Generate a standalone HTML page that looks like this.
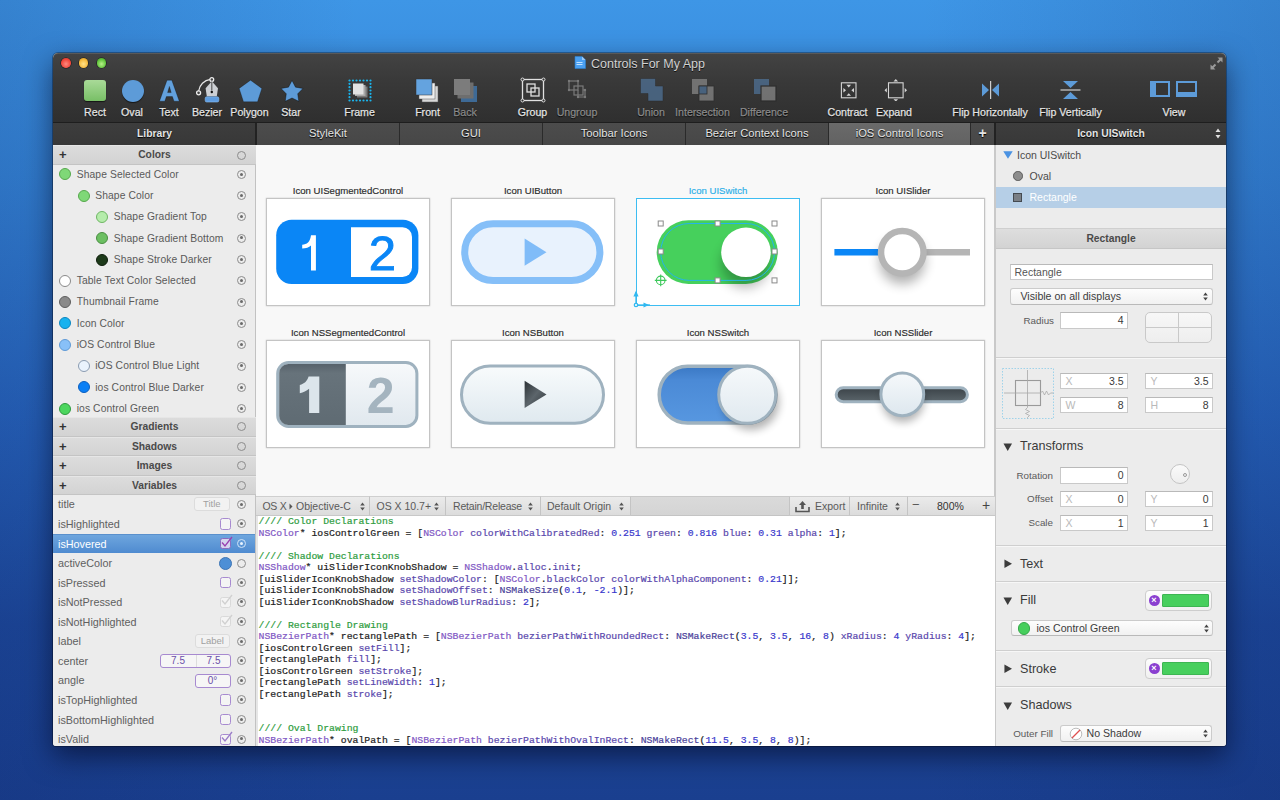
<!DOCTYPE html>
<html><head><meta charset="utf-8">
<style>
*{box-sizing:border-box;margin:0;padding:0}
html,body{width:1280px;height:800px;overflow:hidden}
body{position:relative;font-family:"Liberation Sans",sans-serif;background:linear-gradient(90deg,rgba(10,30,90,.16) 0%,rgba(10,30,90,0) 28%,rgba(10,30,90,0) 72%,rgba(10,30,90,.16) 100%),linear-gradient(180deg,#3e96e6 0%,#3585d8 22%,#2764bd 52%,#1d489b 78%,#1a3f8f 100%)}
.a{position:absolute}
#win{left:53px;top:53px;width:1173px;height:693px;background:#ececec;border-radius:5px 5px 3px 3px;box-shadow:0 10px 28px rgba(0,0,20,.55),0 0 0 1px rgba(0,0,0,.3)}
#tb{left:53px;top:53px;width:1173px;height:70px;background:linear-gradient(180deg,#434343 0%,#393939 40%,#2f2f2f 100%);border-radius:5px 5px 0 0;border-bottom:1px solid #1e1e1e;box-shadow:inset 0 1px 0 rgba(255,255,255,.12)}
.lbl{position:absolute;top:106px;font-size:10.6px;color:#e4e4e4;-webkit-text-stroke:.25px currentColor;text-shadow:0 1px 1px #000;white-space:nowrap;transform:translateX(-50%)}
.dim{color:#8a8a8a}
.tl{position:absolute;top:58.2px;width:9.5px;height:9.5px;border-radius:50%;box-shadow:0 0 0 .6px rgba(0,0,0,.55)}

.tab{position:absolute;top:123px;height:22px;background:linear-gradient(#4c4c4c,#474747);border-right:1px solid #2a2a2a;color:#e4e4e4;font-size:11.2px;text-align:center;line-height:21px;text-shadow:0 1px 1px #000;white-space:nowrap}
.hdr{position:absolute;top:123px;height:22px;background:linear-gradient(#3d3d3d,#383838);color:#e4e4e4;font-size:10.3px;font-weight:bold;text-align:center;line-height:21px;text-shadow:0 1px 1px #000}
.sec{position:absolute;left:53px;width:203px;height:19.5px;background:linear-gradient(#dcdcdc,#d3d3d3);border-bottom:1px solid #c4c4c4;border-top:1px solid #e6e6e6;font-size:10.3px;font-weight:bold;color:#4a4a4a;text-align:center;line-height:18px}
.sec .pl{position:absolute;left:6px;top:0;font-size:13px;font-weight:bold;color:#333}
.rad{position:absolute;width:9px;height:9px;border-radius:50%;border:1.2px solid #8c8c8c}
.rad.on::after{content:"";position:absolute;left:1.8px;top:1.8px;width:3px;height:3px;border-radius:50%;background:#6a6a6a}
.row{position:absolute;font-size:10.3px;color:#5a5a5a;letter-spacing:.1px;white-space:nowrap;line-height:12px}
.dot{position:absolute;width:12px;height:12px;border-radius:50%}
.vrow{position:absolute;left:58px;font-size:10.8px;color:#606060;white-space:nowrap;line-height:12px}
.cb{position:absolute;left:219.5px;width:11.2px;height:11.2px;border:1.2px solid #a78ad0;border-radius:2.5px;background:#f4f4f4}
.fld{position:absolute;height:13px;border:1px solid #a78ad0;border-radius:3px;background:#f6f6f6;font-size:10px;color:#6a50a8;text-align:center;line-height:11px}

.frm{position:absolute;width:164px;height:108px;background:#fff;border:1px solid #c4c4c4;box-shadow:0 0 1.5px rgba(0,0,0,.22)}
.ft{position:absolute;width:164px;text-align:center;font-size:9.6px;color:#2a2a2a;white-space:nowrap;line-height:11px;-webkit-text-stroke:.15px currentColor}

.bb{position:absolute;top:496px;height:20px;background:linear-gradient(#ebebeb,#dcdcdc);border-right:1px solid #c4c4c4;border-top:1px solid #cfcfcf;border-bottom:1px solid #c8c8c8;font-size:10.5px;color:#5a5a5a;line-height:18px;white-space:nowrap}
.ud{position:absolute;top:5px;width:5px;height:9px}
.code{position:absolute;left:258.5px;font-family:"Liberation Mono",monospace;font-size:9.8px;color:#222;white-space:pre;line-height:11.5px;-webkit-text-stroke:.2px currentColor}
.cm{color:#2e9d40}.cl{color:#7f58c4}.me{color:#5a48ad}.nu{color:#3838cc}.fn{color:#4a3f9a}

.inp{position:absolute;height:16.5px;background:#fff;border:1px solid #c9c9c9;border-top-color:#b9b9b9;font-size:10.5px;color:#3a3a3a;line-height:14px;white-space:nowrap}
.inp .ph{position:absolute;left:5px;top:0;color:#b9b9b9}
.inp .v{position:absolute;right:3px;top:0}
.pop{position:absolute;height:17px;border-radius:3px;background:linear-gradient(#fdfdfd,#f1f1f1);border:1px solid #cbcbcb;border-bottom-color:#b9b9b9;font-size:10.6px;color:#3c3c3c;line-height:15px;white-space:nowrap}
.plbl{position:absolute;font-size:9.8px;color:#5a5a5a;text-align:right;white-space:nowrap;line-height:12px}
.shdr{position:absolute;left:1004px;font-size:12.6px;color:#3a3a3a;white-space:nowrap;line-height:14px}
.tri{position:absolute;left:1003px;width:9.5px;height:9.5px}
.hr{position:absolute;left:996px;width:230px;height:1px;background:#cfcfcf;border-bottom:1px solid #f7f7f7;height:2px}
.well{position:absolute;left:1144.5px;width:67.5px;height:20.5px;border-radius:4px;background:linear-gradient(#fdfdfd,#f0f0f0);border:1px solid #cdcdcd}
.well .sw{position:absolute;left:16.5px;top:2.5px;width:47px;height:13.5px;background:#47cf5d;border-radius:1px;border:1px solid #3db552}
.well .x{position:absolute;left:3px;top:4px;width:11px;height:11px;border-radius:50%;background:#8a3fd0;color:#fff;font-size:9px;font-weight:bold;text-align:center;line-height:11px}
</style></head><body>
<div id="win" class="a"></div>
<div id="tb" class="a"></div>
<div class="tl" style="left:61px;background:radial-gradient(circle at 50% 60%,#ff8a80,#f2453a 60%,#b8281f)"></div>
<div class="tl" style="left:78.8px;background:radial-gradient(circle at 50% 60%,#ffe28a,#f5b83a 60%,#c08a1a)"></div>
<div class="tl" style="left:96.6px;background:radial-gradient(circle at 50% 60%,#b8f08a,#5fc43a 60%,#3a8a1f)"></div>

<!-- title -->
<svg class="a" style="left:574px;top:56px" width="12" height="13" viewBox="0 0 12 13"><path d="M1 0.5h7l3.5 3.5v8.5h-10.5z" fill="#4a9ff0" stroke="#2a7fd0" stroke-width=".6"/><path d="M8 0.5v3.5h3.5" fill="#9ccaf7"/><rect x="2.5" y="6" width="6" height="1" fill="#bfe0ff"/><rect x="2.5" y="8" width="6" height="1" fill="#bfe0ff"/></svg>
<div class="a" style="left:591px;top:57px;font-size:12.5px;color:#d2d2d2;text-shadow:0 1px 0 #111;white-space:nowrap">Controls For My App</div>
<svg class="a" style="left:1210px;top:57px" width="13" height="13" viewBox="0 0 13 13"><g fill="#9a9a9a"><path d="M7.5 0.5h5v5l-1.8-1.8-2.5 2.5-1.4-1.4 2.5-2.5z"/><path d="M5.5 12.5h-5v-5l1.8 1.8 2.5-2.5 1.4 1.4-2.5 2.5z"/></g></svg>
<!-- tool icons -->
<div class="a" style="left:84px;top:80px;width:22px;height:21px;border-radius:3px;background:linear-gradient(#a9da98,#78bf66);box-shadow:0 1px 1px rgba(0,0,0,.6)"></div>
<div class="a" style="left:121.5px;top:80px;width:22px;height:22px;border-radius:50%;background:#5d9bd8;box-shadow:0 1px 1px rgba(0,0,0,.6)"></div>
<svg class="a" style="left:158px;top:79px" width="23" height="24" viewBox="0 0 23 24"><path d="M9 1.2H13.8L21.3 22.2H16L14.4 17.6H8.4L6.8 22.2H1.5Z M9.6 13.6H13.2L11.4 7.4Z" fill="#62a0dc" fill-rule="evenodd" stroke="rgba(0,0,0,.45)" stroke-width=".6"/></svg>
<svg class="a" style="left:195px;top:76px" width="26" height="27" viewBox="0 0 26 27"><path d="M3.6 15C4.5 9 9 4.2 15.5 3.4" fill="none" stroke="#e8e8e8" stroke-width="1.2"/><circle cx="3.6" cy="16.8" r="2" fill="#444" stroke="#eee" stroke-width="1.3"/><circle cx="16.8" cy="3.6" r="1.9" fill="#444" stroke="#eee" stroke-width="1.3"/><path d="M16.8 5.2L23 12.2L21.8 20.2H11.8L10.6 12.2z" fill="#cdd0d4"/><path d="M16.8 5.5v9" stroke="#555" stroke-width="1.1"/><circle cx="16.8" cy="16" r="1.2" fill="#111"/><rect x="10.2" y="20.8" width="13.6" height="5.2" rx="1.5" fill="#5f9de0" stroke="#8cc0f5" stroke-width=".6"/></svg>
<svg class="a" style="left:238px;top:79px" width="25" height="24" viewBox="0 0 25 24"><path d="M12.5 1.2l11.3 8.2-4.3 13.3h-14l-4.3-13.3z" fill="#5d9bd8" stroke="rgba(0,0,0,.4)" stroke-width=".6"/></svg>
<svg class="a" style="left:280px;top:78.5px" width="24" height="24" viewBox="0 0 24 24"><path d="M12.00 1.50L15.53 8.15L22.94 9.45L17.71 14.85L18.76 22.30L12.00 19.00L5.24 22.30L6.29 14.85L1.06 9.45L8.47 8.15z" fill="#5d9bd8" stroke="rgba(0,0,0,.45)" stroke-width=".8" stroke-linejoin="round"/></svg>
<svg class="a" style="left:347px;top:78px" width="26" height="25" viewBox="0 0 26 25"><g fill="#1ab4ec"><circle cx="2.50" cy="2.5" r="1.1"/><circle cx="2.50" cy="22.5" r="1.1"/><circle cx="6.00" cy="2.5" r="1.1"/><circle cx="6.00" cy="22.5" r="1.1"/><circle cx="9.50" cy="2.5" r="1.1"/><circle cx="9.50" cy="22.5" r="1.1"/><circle cx="13.00" cy="2.5" r="1.1"/><circle cx="13.00" cy="22.5" r="1.1"/><circle cx="16.50" cy="2.5" r="1.1"/><circle cx="16.50" cy="22.5" r="1.1"/><circle cx="20.00" cy="2.5" r="1.1"/><circle cx="20.00" cy="22.5" r="1.1"/><circle cx="23.50" cy="2.5" r="1.1"/><circle cx="23.50" cy="22.5" r="1.1"/><circle cx="2.5" cy="5.83" r="1.1"/><circle cx="23.5" cy="5.83" r="1.1"/><circle cx="2.5" cy="9.17" r="1.1"/><circle cx="23.5" cy="9.17" r="1.1"/><circle cx="2.5" cy="12.50" r="1.1"/><circle cx="23.5" cy="12.50" r="1.1"/><circle cx="2.5" cy="15.83" r="1.1"/><circle cx="23.5" cy="15.83" r="1.1"/><circle cx="2.5" cy="19.17" r="1.1"/><circle cx="23.5" cy="19.17" r="1.1"/></g><rect x="10" y="8.5" width="10.5" height="11" fill="#7a7a7a"/><rect x="8" y="7" width="10.5" height="11" fill="#a8a8a8"/><rect x="6" y="5.5" width="10.5" height="11" fill="#e2e2e2"/></svg>
<svg class="a" style="left:415px;top:78px" width="26" height="25" viewBox="0 0 26 25"><rect x="7" y="8" width="16" height="16" fill="#d8d8d8" stroke="#555" stroke-width=".5"/><rect x="4" y="5" width="16" height="16" fill="#eeeeee" stroke="#555" stroke-width=".5"/><rect x="1" y="1" width="16" height="16" fill="#64a3df" stroke="#333" stroke-width=".5"/></svg>
<svg class="a" style="left:453px;top:78px" width="26" height="25" viewBox="0 0 26 25"><rect x="8" y="8" width="16" height="16" fill="#3e6a96"/><rect x="4.5" y="4.5" width="16" height="16" fill="#6e6e6e"/><rect x="1" y="1" width="16" height="16" fill="#7c7c7c"/></svg>
<svg class="a" style="left:520px;top:77px" width="26" height="26" viewBox="0 0 26 26"><rect x="2.5" y="2.5" width="21" height="21" fill="none" stroke="#e0e0e0" stroke-width="1.3"/><g fill="#333" stroke="#e0e0e0" stroke-width="1"><circle cx="2.5" cy="2.5" r="1.5"/><circle cx="23.5" cy="2.5" r="1.5"/><circle cx="2.5" cy="23.5" r="1.5"/><circle cx="23.5" cy="23.5" r="1.5"/></g><rect x="7" y="7" width="8" height="8" fill="none" stroke="#e0e0e0" stroke-width="1.3"/><rect x="11" y="11" width="8" height="8" fill="none" stroke="#e0e0e0" stroke-width="1.3"/></svg>
<svg class="a" style="left:567px;top:79px" width="22" height="22" viewBox="0 0 22 22"><g fill="none" stroke="#7a7a7a" stroke-width="1.2"><rect x="2" y="2" width="9" height="9"/><rect x="7" y="7" width="9" height="9"/><path d="M11 11v7h7v-7h-2"/></g><g fill="#7a7a7a"><circle cx="2" cy="2" r="1.2"/><circle cx="11" cy="2" r="1.2"/><circle cx="2" cy="11" r="1.2"/><circle cx="18" cy="11" r="1.2"/><circle cx="11" cy="18" r="1.2"/><circle cx="18" cy="18" r="1.2"/></g></svg>
<svg class="a" style="left:640px;top:78px;opacity:.78" width="24" height="24" viewBox="0 0 24 24"><path d="M0.5 0.5h15v7.5h7.5v15h-15v-7.5h-7.5z" fill="#4e6f92" stroke="#2b2b2b" stroke-width=".5"/></svg>
<svg class="a" style="left:691px;top:78px;opacity:.78" width="25" height="24" viewBox="0 0 25 24"><rect x="1" y="1" width="15" height="15" fill="#838383"/><rect x="8" y="8" width="15" height="15" fill="#838383" stroke="#2b2b2b" stroke-width=".8"/><rect x="8" y="8" width="8" height="8" fill="#4e6f92" stroke="#2b2b2b" stroke-width=".8"/></svg>
<svg class="a" style="left:753px;top:78px;opacity:.78" width="25" height="24" viewBox="0 0 25 24"><rect x="1" y="1" width="15" height="15" fill="#4e6f92"/><rect x="8" y="8" width="15" height="15" fill="#838383" stroke="#2b2b2b" stroke-width="1.2"/></svg>
<svg class="a" style="left:840px;top:81px" width="17" height="18" viewBox="0 0 17 18"><rect x="1.4" y="1.8" width="14.6" height="15" fill="none" stroke="#d6d6d6" stroke-width="1.1"/><g fill="#d6d6d6"><path d="M6.5 3.8h4.5l-2.25 2.6z"/><path d="M6.5 14.8h4.5l-2.25-2.6z"/><path d="M3.4 7.1v4.5l2.6-2.25z"/><path d="M14 7.1v4.5l-2.6-2.25z"/></g></svg>
<svg class="a" style="left:884px;top:78px" width="23" height="23" viewBox="0 0 23 23"><rect x="4.5" y="4.8" width="14.6" height="15" fill="none" stroke="#d6d6d6" stroke-width="1.1"/><g fill="#d6d6d6"><path d="M11.8 1.1l2.3 2.3h-4.6z"/><path d="M11.8 23.5l2.3-2.3h-4.6z"/><path d="M0.5 12.3l2.3-2.3v4.6z"/><path d="M23 12.3l-2.3-2.3v4.6z"/></g></svg>
<svg class="a" style="left:981px;top:81px" width="19" height="18" viewBox="0 0 19 18"><path d="M1 2.5l7 6.5-7 6.5z" fill="#5d9bd8"/><path d="M18 2.5l-7 6.5 7 6.5z" fill="#5d9bd8"/><rect x="9" y="0" width="1.2" height="18" fill="#cfcfcf"/></svg>
<svg class="a" style="left:1060px;top:80px" width="21" height="20" viewBox="0 0 21 20"><path d="M3 1h15l-7.5 7z" fill="#5d9bd8"/><path d="M3 19h15l-7.5-7z" fill="#5d9bd8"/><rect x="0.5" y="9.4" width="20" height="1.2" fill="#cfcfcf"/></svg>
<svg class="a" style="left:1149px;top:80px" width="49" height="18" viewBox="0 0 49 18"><rect x="1" y="1" width="20" height="16" fill="#5d9bd8"/><rect x="7" y="3" width="12" height="12" fill="#353535"/><rect x="27" y="1" width="21" height="16" fill="#5d9bd8"/><rect x="29" y="3" width="17" height="9" fill="#353535"/></svg>
<!-- labels -->
<div class="lbl" style="left:95px">Rect</div>
<div class="lbl" style="left:132px">Oval</div>
<div class="lbl" style="left:169px">Text</div>
<div class="lbl" style="left:207px">Bezier</div>
<div class="lbl" style="left:249.5px">Polygon</div>
<div class="lbl" style="left:291px">Star</div>
<div class="lbl" style="left:359.5px">Frame</div>
<div class="lbl" style="left:427.5px">Front</div>
<div class="lbl dim" style="left:465px">Back</div>
<div class="lbl" style="left:532.5px">Group</div>
<div class="lbl dim" style="left:577px">Ungroup</div>
<div class="lbl dim" style="left:651px">Union</div>
<div class="lbl dim" style="left:702.5px">Intersection</div>
<div class="lbl dim" style="left:764px">Difference</div>
<div class="lbl" style="left:847.5px">Contract</div>
<div class="lbl" style="left:894px">Expand</div>
<div class="lbl" style="left:990px">Flip Horizontally</div>
<div class="lbl" style="left:1070.5px">Flip Vertically</div>
<div class="lbl" style="left:1174px">View</div>

<!-- tab row -->
<div class="hdr" style="left:53px;width:203px">Library</div>
<div class="a" style="left:255px;top:123px;width:2px;height:22px;background:#222"></div>
<div class="tab" style="left:257px;width:143px">StyleKit</div>
<div class="tab" style="left:400px;width:143px">GUI</div>
<div class="tab" style="left:543px;width:143px">Toolbar Icons</div>
<div class="tab" style="left:686px;width:143px">Bezier Context Icons</div>
<div class="tab" style="left:829px;width:142px;background:linear-gradient(#6a6a6a,#626262);border-right:1px solid #2a2a2a">iOS Control Icons</div>
<div class="tab" style="left:971px;width:24px;font-size:14px;font-weight:bold;line-height:20px">+</div>
<div class="a" style="left:994px;top:123px;width:2px;height:22px;background:#222"></div>
<div class="hdr" style="left:996px;width:230px">Icon UISwitch</div>
<svg class="a" style="left:1215px;top:128px" width="6" height="11" viewBox="0 0 6 11"><path d="M3 0.5l2.5 3.5h-5z M3 10.5l2.5-3.5h-5z" fill="#e0e0e0"/></svg>
<!-- left panel -->
<div class="a" style="left:53px;top:145px;width:203px;height:601px;background:#ececec;border-radius:0 0 0 3px"></div>
<div class="a" style="left:255px;top:145px;width:1px;height:601px;background:#c2c2c2"></div>
<div class="sec" style="top:145px;height:20px">Colors<span class="pl">+</span></div>
<div class="rad" style="left:237px;top:151px"></div>
<div class="dot" style="left:59.0px;top:168.3px;background:#7fd877;border:1px solid #56a84c"></div><div class="row" style="left:76.7px;top:168.6px">Shape Selected Color</div><div class="rad on" style="left:237px;top:169.8px"></div>
<div class="dot" style="left:77.5px;top:189.6px;background:#7fd877;border:1px solid #56a84c"></div><div class="row" style="left:95.2px;top:189.9px">Shape Color</div><div class="rad on" style="left:237px;top:191.1px"></div>
<div class="dot" style="left:96.0px;top:210.9px;background:#b5ecab;border:1px solid #6fb664"></div><div class="row" style="left:113.7px;top:211.2px">Shape Gradient Top</div><div class="rad on" style="left:237px;top:212.4px"></div>
<div class="dot" style="left:96.0px;top:232.2px;background:#6cbf62;border:1px solid #4a8f42"></div><div class="row" style="left:113.7px;top:232.5px">Shape Gradient Bottom</div><div class="rad on" style="left:237px;top:233.7px"></div>
<div class="dot" style="left:96.0px;top:253.5px;background:#1d3a1a;border:1px solid #0f1f0d"></div><div class="row" style="left:113.7px;top:253.8px">Shape Stroke Darker</div><div class="rad on" style="left:237px;top:255.0px"></div>
<div class="dot" style="left:59.0px;top:274.8px;background:#ffffff;border:1px solid #8a8a8a"></div><div class="row" style="left:76.7px;top:275.1px">Table Text Color Selected</div><div class="rad on" style="left:237px;top:276.3px"></div>
<div class="dot" style="left:59.0px;top:296.1px;background:#8a8a8a;border:1px solid #5e5e5e"></div><div class="row" style="left:76.7px;top:296.4px">Thumbnail Frame</div><div class="rad on" style="left:237px;top:297.6px"></div>
<div class="dot" style="left:59.0px;top:317.4px;background:#18b2ef;border:1px solid #0a86c0"></div><div class="row" style="left:76.7px;top:317.7px">Icon Color</div><div class="rad on" style="left:237px;top:318.9px"></div>
<div class="dot" style="left:59.0px;top:338.7px;background:#88c0f8;border:1px solid #5f9ad6"></div><div class="row" style="left:76.7px;top:339.0px">iOS Control Blue</div><div class="rad on" style="left:237px;top:340.2px"></div>
<div class="dot" style="left:77.5px;top:360.0px;background:#eaf3fd;border:1px solid #8a9bb0"></div><div class="row" style="left:95.2px;top:360.3px">iOS Control Blue Light</div><div class="rad on" style="left:237px;top:361.5px"></div>
<div class="dot" style="left:77.5px;top:381.3px;background:#0a7ff5;border:1px solid #0a5fc0"></div><div class="row" style="left:95.2px;top:381.6px">ios Control Blue Darker</div><div class="rad on" style="left:237px;top:382.8px"></div>
<div class="dot" style="left:59.0px;top:402.6px;background:#4cd65e;border:1px solid #2f9a3f"></div><div class="row" style="left:76.7px;top:402.9px">ios Control Green</div><div class="rad on" style="left:237px;top:404.1px"></div>
<div class="sec" style="top:417.0px">Gradients<span class="pl">+</span></div><div class="rad" style="left:237px;top:422.0px"></div>
<div class="sec" style="top:436.5px">Shadows<span class="pl">+</span></div><div class="rad" style="left:237px;top:441.5px"></div>
<div class="sec" style="top:456.0px">Images<span class="pl">+</span></div><div class="rad" style="left:237px;top:461.0px"></div>
<div class="sec" style="top:475.5px">Variables<span class="pl">+</span></div><div class="rad" style="left:237px;top:480.5px"></div>
<!-- variables -->
<div class="a" style="left:53px;top:534px;width:202px;height:19px;background:linear-gradient(#6ea6de,#4f8bd0);border-top:1px solid #5a90cc"></div>
<div class="vrow" style="top:498.4px;color:#606060">title</div><div class="rad on" style="left:237px;top:499.9px"></div><div class="a" style="left:193.5px;top:497.4px;width:36.5px;height:14px;border:1px solid #dcdcdc;border-radius:3px;background:#f2f2f2;font-size:9.5px;color:#a0a0a0;text-align:center;line-height:12px">Title</div>
<div class="vrow" style="top:517.9px;color:#606060">isHighlighted</div><div class="rad on" style="left:237px;top:519.4px"></div><div class="cb" style="top:518.4px"></div>
<div class="vrow" style="top:537.5px;color:#fff">isHovered</div><div class="a" style="left:237px;top:539px;width:9px;height:9px;border-radius:50%;border:1.2px solid #cfe3f7"><div class="a" style="left:1.8px;top:1.8px;width:3px;height:3px;border-radius:50%;background:#e8f4ff"></div></div><div class="cb" style="top:538.0px;background:#d6d4ee;border-color:#8a6cc0"></div><svg class="a" style="left:219px;top:535.5px" width="14" height="14" viewBox="0 0 14 14"><path d="M3 6.5l3 3.5 7-9" fill="none" stroke="#9a3fb0" stroke-width="1.3"/></svg>
<div class="vrow" style="top:557.0px;color:#606060">activeColor</div><div class="rad" style="left:237px;top:558.5px"></div><div class="a" style="left:218.5px;top:556.5px;width:13px;height:13px;border-radius:50%;background:#4d8fd6;border:1px solid #3d75b5"></div>
<div class="vrow" style="top:576.6px;color:#606060">isPressed</div><div class="rad on" style="left:237px;top:578.1px"></div><div class="cb" style="top:577.1px"></div>
<div class="vrow" style="top:596.1px;color:#606060">isNotPressed</div><div class="rad on" style="left:237px;top:597.6px"></div><div class="cb" style="top:596.6px;border-color:#d9d9d9"></div><svg class="a" style="left:219px;top:594.1px" width="14" height="14" viewBox="0 0 14 14"><path d="M3 6.5l3 3.5 7-9" fill="none" stroke="#d0d0d0" stroke-width="1.3"/></svg>
<div class="vrow" style="top:615.7px;color:#606060">isNotHighlighted</div><div class="rad on" style="left:237px;top:617.2px"></div><div class="cb" style="top:616.2px;border-color:#d9d9d9"></div><svg class="a" style="left:219px;top:613.7px" width="14" height="14" viewBox="0 0 14 14"><path d="M3 6.5l3 3.5 7-9" fill="none" stroke="#d0d0d0" stroke-width="1.3"/></svg>
<div class="vrow" style="top:635.2px;color:#606060">label</div><div class="rad on" style="left:237px;top:636.8px"></div><div class="a" style="left:194.5px;top:634.2px;width:35.5px;height:14px;border:1px solid #dcdcdc;border-radius:3px;background:#f2f2f2;font-size:9.5px;color:#a0a0a0;text-align:center;line-height:12px">Label</div>
<div class="vrow" style="top:654.8px;color:#606060">center</div><div class="rad on" style="left:237px;top:656.3px"></div><div class="fld" style="left:159.5px;top:654.3px;width:71px;height:14px"><span class="a" style="left:0;top:0;width:35px;line-height:12px">7.5</span><span class="a" style="left:35px;top:0;width:35px;border-left:1px solid #ddd;height:12px;line-height:12px">7.5</span></div>
<div class="vrow" style="top:674.4px;color:#606060">angle</div><div class="rad on" style="left:237px;top:675.9px"></div><div class="fld" style="left:194.5px;top:673.9px;width:36px;height:14px;line-height:12px">0°</div>
<div class="vrow" style="top:693.9px;color:#606060">isTopHighlighted</div><div class="rad on" style="left:237px;top:695.4px"></div><div class="cb" style="top:694.4px"></div>
<div class="vrow" style="top:713.5px;color:#606060">isBottomHighlighted</div><div class="rad on" style="left:237px;top:715.0px"></div><div class="cb" style="top:714.0px"></div>
<div class="vrow" style="top:733.0px;color:#606060">isValid</div><div class="rad on" style="left:237px;top:734.5px"></div><div class="cb" style="top:733.5px"></div><svg class="a" style="left:219px;top:731.0px" width="14" height="14" viewBox="0 0 14 14"><path d="M3 6.5l3 3.5 7-9" fill="none" stroke="#9a7cc8" stroke-width="1.3"/></svg>

<!-- canvas -->
<div class="a" style="left:256px;top:145px;width:739px;height:351px;background:#f8f8f8"></div>
<div class="a" style="left:994px;top:145px;width:2px;height:601px;background:#c9c9c9"></div>
<div class="frm" style="left:266px;top:198px"></div><div class="ft" style="left:266px;top:185px">Icon UISegmentedControl</div>
<div class="frm" style="left:451px;top:198px"></div><div class="ft" style="left:451px;top:185px">Icon UIButton</div>
<div class="frm" style="left:636px;top:198px;border:1.3px solid #3dbdf2;box-shadow:none"></div><div class="ft" style="left:636px;top:185px;color:#28aee8">Icon UISwitch</div>
<div class="frm" style="left:821px;top:198px"></div><div class="ft" style="left:821px;top:185px">Icon UISlider</div>
<div class="frm" style="left:266px;top:340px"></div><div class="ft" style="left:266px;top:327px">Icon NSSegmentedControl</div>
<div class="frm" style="left:451px;top:340px"></div><div class="ft" style="left:451px;top:327px">Icon NSButton</div>
<div class="frm" style="left:636px;top:340px"></div><div class="ft" style="left:636px;top:327px">Icon NSSwitch</div>
<div class="frm" style="left:821px;top:340px"></div><div class="ft" style="left:821px;top:327px">Icon NSSlider</div>

<!-- canvas icons -->
<svg class="a" style="left:266px;top:198px" width="164" height="107" viewBox="0 0 164 107">
<rect x="10.2" y="21.8" width="142.2" height="64.2" rx="15.5" fill="#0a86f6"/>
<path d="M85 29.3h51.5a9.5 9.5 0 0 1 9.5 9.5v30.7a9.5 9.5 0 0 1 -9.5 9.5h-51.5z" fill="#fff"/>
<path d="M45 37.3h4.9v35.2h-4.9v-25c-2 2-5 3-8.8 3.1v-3.8c4.6-.2 8-2.8 8.8-9.5z" fill="#fff"/>
<text x="116.5" y="72.3" font-family="Liberation Sans" font-size="49" fill="#0a86f6" stroke="#0a86f6" stroke-width=".9" text-anchor="middle">2</text>
</svg>
<svg class="a" style="left:451px;top:198px" width="164" height="107" viewBox="0 0 164 107">
<rect x="13.7" y="25.8" width="135.2" height="56.7" rx="28.35" fill="#e8f2fd" stroke="#85bff8" stroke-width="7"/>
<path d="M73.6 40.5L95.5 54.2L73.6 67.8z" fill="#80bcf8"/>
</svg>
<svg class="a" style="left:636px;top:198px" width="164" height="120" viewBox="0 0 164 120" style="overflow:visible">
<defs><filter id="sh1" x="-50%" y="-50%" width="200%" height="200%"><feGaussianBlur stdDeviation="6"/></filter>
<filter id="sh2" x="-50%" y="-50%" width="200%" height="200%"><feGaussianBlur stdDeviation="2.5"/></filter></defs>
<rect x="20.7" y="22.3" width="121" height="63.7" rx="31.85" fill="#46d05c"/>
<circle cx="109" cy="66" r="24" fill="#000" opacity=".27" filter="url(#sh1)"/>
<circle cx="110" cy="54.3" r="24.8" fill="#fff"/>
<rect x="24.7" y="25.5" width="113.8" height="56.9" rx="28.45" fill="none" stroke="#25b4ea" stroke-width="1"/>
<g fill="#fff" stroke="#8a8a8a" stroke-width="1">
<rect x="22.2" y="23" width="5" height="5"/><rect x="79.1" y="23" width="5" height="5"/><rect x="136" y="23" width="5" height="5"/>
<rect x="22.2" y="51" width="5" height="5"/><rect x="136" y="51" width="5" height="5"/>
<rect x="79.1" y="79.9" width="5" height="5"/><rect x="136" y="79.9" width="5" height="5"/>
</g>
<g stroke="#3cc85a" stroke-width="1.1" fill="none"><circle cx="24.7" cy="82.4" r="4.3"/><path d="M24.7 76.5v11.8M18.8 82.4h11.8"/></g>
</svg>
<svg class="a" style="left:629px;top:284.3px" width="30" height="30" viewBox="0 0 30 30">
<g stroke="#30b8f0" stroke-width="1.3" fill="none"><path d="M7 19V8"/><path d="M9 21h12"/><circle cx="7" cy="21" r="1.7" fill="#fff"/></g>
<path d="M7 6.5l-2.6 6h5.2z" fill="#30b8f0"/><path d="M20 21l-5.5-2.6v5.2z" fill="#30b8f0"/>
</svg>
<svg class="a" style="left:821px;top:198px" width="164" height="107" viewBox="0 0 164 107">
<defs><filter id="sh3" x="-50%" y="-50%" width="200%" height="200%"><feGaussianBlur stdDeviation="6"/></filter></defs>
<rect x="13.4" y="51" width="43.8" height="6.5" fill="#0a86f6"/>
<rect x="105" y="51" width="44" height="6.5" fill="#b5b5b5"/>
<circle cx="81.3" cy="63" r="23" fill="#000" opacity=".3" filter="url(#sh3)"/>
<circle cx="81.3" cy="54.3" r="21.25" fill="#fff" stroke="#b5b5b5" stroke-width="6.5"/>
</svg>
<svg class="a" style="left:266px;top:340px" width="164" height="107" viewBox="0 0 164 107">
<defs><linearGradient id="g5a" x1="0" y1="0" x2="0" y2="1"><stop offset="0" stop-color="#56616a"/><stop offset=".15" stop-color="#67737b"/><stop offset="1" stop-color="#5f6b73"/></linearGradient>
<linearGradient id="g5b" x1="0" y1="0" x2="0" y2="1"><stop offset="0" stop-color="#f7f9fb"/><stop offset="1" stop-color="#e0e8ee"/></linearGradient></defs>
<rect x="11.7" y="22.5" width="139.2" height="63.9" rx="11" fill="url(#g5b)" stroke="#9fb2bf" stroke-width="3"/>
<path d="M22.2 24h57.6v60.9h-57.6a9 9 0 0 1 -9 -9v-42.9a9 9 0 0 1 9 -9z" fill="url(#g5a)"/>
<path d="M42.6 36.4h10.7v36.6h-10.2v-24.2c-2.8 2.2-5.6 3.5-9.3 4.4v-8.2c4.4-1.4 7.2-3.6 8.8-8.6z" fill="#dce5eb"/>
<text x="114.6" y="73" font-family="Liberation Sans" font-weight="bold" font-size="50" fill="#a4b4bf" text-anchor="middle">2</text>
</svg>
<svg class="a" style="left:451px;top:340px" width="164" height="107" viewBox="0 0 164 107">
<defs><linearGradient id="g6a" x1="0" y1="0" x2="0" y2="1"><stop offset="0" stop-color="#f8fbfc"/><stop offset="1" stop-color="#dfe9ef"/></linearGradient>
<linearGradient id="g6b" x1="0" y1="0" x2="1" y2="1"><stop offset="0" stop-color="#2c3236"/><stop offset=".5" stop-color="#5c656b"/><stop offset="1" stop-color="#30363a"/></linearGradient></defs>
<rect x="10.5" y="26.1" width="142" height="57.1" rx="28.55" fill="url(#g6a)" stroke="#9fb2bf" stroke-width="3"/>
<path d="M73.6 40.8L95.5 54.4L73.6 68z" fill="url(#g6b)"/>
</svg>
<svg class="a" style="left:636px;top:340px" width="164" height="107" viewBox="0 0 164 107">
<defs><linearGradient id="g7a" x1="0" y1="0" x2="0" y2="1"><stop offset="0" stop-color="#3a78c4"/><stop offset=".25" stop-color="#4b8ad6"/><stop offset="1" stop-color="#5797e0"/></linearGradient>
<linearGradient id="g7b" x1="0" y1="0" x2="0" y2="1"><stop offset="0" stop-color="#f6f9fb"/><stop offset="1" stop-color="#e0e9ef"/></linearGradient>
<filter id="sh7" x="-50%" y="-50%" width="200%" height="200%"><feGaussianBlur stdDeviation="4"/></filter></defs>
<rect x="23.2" y="26.3" width="116.8" height="56.7" rx="28.35" fill="url(#g7a)" stroke="#9fb2bf" stroke-width="3.5"/>
<circle cx="115" cy="62" r="28" fill="#000" opacity=".3" filter="url(#sh7)"/>
<circle cx="111.2" cy="54.8" r="28.5" fill="url(#g7b)" stroke="#9fb2bf" stroke-width="3"/>
</svg>
<svg class="a" style="left:821px;top:340px" width="164" height="107" viewBox="0 0 164 107">
<defs><linearGradient id="g8a" x1="0" y1="0" x2="0" y2="1"><stop offset="0" stop-color="#3b4348"/><stop offset="1" stop-color="#5b656b"/></linearGradient>
<linearGradient id="g8b" x1="0" y1="0" x2="0" y2="1"><stop offset="0" stop-color="#f6f9fb"/><stop offset="1" stop-color="#dde7ee"/></linearGradient>
<filter id="sh8" x="-50%" y="-50%" width="200%" height="200%"><feGaussianBlur stdDeviation="4"/></filter></defs>
<rect x="15.2" y="47.7" width="131.2" height="14" rx="7" fill="url(#g8a)" stroke="#9fb2bf" stroke-width="3"/>
<circle cx="82" cy="61" r="21" fill="#000" opacity=".3" filter="url(#sh8)"/>
<circle cx="81.3" cy="54.3" r="21.4" fill="url(#g8b)" stroke="#9fb2bf" stroke-width="3"/>
</svg>

<!-- bottom bar -->
<div class="a" style="left:256px;top:496px;width:739px;height:20px;background:linear-gradient(#dadada,#d4d4d4);border-top:1px solid #c9c9c9;border-bottom:1px solid #c4c4c4"></div>
<div class="bb" style="left:256px;width:114px"><span class="a" style="left:6.5px;letter-spacing:-.3px">OS X</span><svg class="a" style="left:33px;top:6px" width="4" height="7" viewBox="0 0 4 7"><path d="M0.5 0.5l3 3-3 3z" fill="#555"/></svg><span class="a" style="left:40px">Objective-C</span><svg class="ud" style="left:103.5px" viewBox="0 0 5 9" width="5" height="9"><path d="M2.5 0.5l2.3 3h-4.6z M2.5 8.5l2.3-3h-4.6z" fill="#555"/></svg></div>
<div class="bb" style="left:370px;width:76px"><span class="a" style="left:6.5px">OS X 10.7+</span><svg class="ud" style="left:64px" viewBox="0 0 5 9" width="5" height="9"><path d="M2.5 0.5l2.3 3h-4.6z M2.5 8.5l2.3-3h-4.6z" fill="#555"/></svg></div>
<div class="bb" style="left:446px;width:95px"><span class="a" style="left:7px;letter-spacing:-.2px">Retain/Release</span><svg class="ud" style="left:81.5px" viewBox="0 0 5 9" width="5" height="9"><path d="M2.5 0.5l2.3 3h-4.6z M2.5 8.5l2.3-3h-4.6z" fill="#555"/></svg></div>
<div class="bb" style="left:541px;width:90px"><span class="a" style="left:6px">Default Origin</span><svg class="ud" style="left:78px" viewBox="0 0 5 9" width="5" height="9"><path d="M2.5 0.5l2.3 3h-4.6z M2.5 8.5l2.3-3h-4.6z" fill="#555"/></svg></div>
<div class="bb" style="left:789px;width:61px;border-left:1px solid #c4c4c4"><svg class="a" style="left:4.5px;top:3px" width="15" height="13" viewBox="0 0 15 13"><path d="M7.5 1l3.5 4h-2.2v4h-2.6v-4h-2.2z" fill="#555"/><path d="M1 7v4.5h13v-4.5" fill="none" stroke="#555" stroke-width="1.6"/></svg><span class="a" style="left:25px">Export</span></div>
<div class="bb" style="left:850px;width:58px"><span class="a" style="left:7px">Infinite</span><svg class="ud" style="left:45px" viewBox="0 0 5 9" width="5" height="9"><path d="M2.5 0.5l2.3 3h-4.6z M2.5 8.5l2.3-3h-4.6z" fill="#555"/></svg></div>
<div class="bb" style="left:908px;width:87px;border-right:none"><span class="a" style="left:4px;top:-1px;font-size:13px">−</span><span class="a" style="left:29px;color:#333">800%</span><span class="a" style="left:74px;top:-1px;font-size:14px;color:#444">+</span></div>
<div class="a" style="left:256px;top:516px;width:739px;height:230px;background:#fff"></div>
<div class="a" style="left:256px;top:516px;width:2px;height:230px;background:#e6e6e6"></div>
<div class="a" style="left:256px;top:516px;width:739px;height:230px;overflow:hidden"><div class="code" style="left:2.5px;top:0px"><span class="cm">//// Color Declarations</span>
<span class="cl">NSColor</span>* iosControlGreen = [<span class="cl">NSColor</span> <span class="me">colorWithCalibratedRed</span>: <span class="nu">0.251</span> <span class="me">green</span>: <span class="nu">0.816</span> <span class="me">blue</span>: <span class="nu">0.31</span> <span class="me">alpha</span>: <span class="nu">1</span>];

<span class="cm">//// Shadow Declarations</span>
<span class="cl">NSShadow</span>* uiSliderIconKnobShadow = <span class="cl">NSShadow</span>.<span class="me">alloc</span>.<span class="me">init</span>;
[uiSliderIconKnobShadow <span class="me">setShadowColor</span>: [<span class="cl">NSColor</span>.<span class="me">blackColor</span> <span class="me">colorWithAlphaComponent</span>: <span class="nu">0.21</span>]];
[uiSliderIconKnobShadow <span class="me">setShadowOffset</span>: <span class="fn">NSMakeSize</span>(<span class="nu">0.1</span>, <span class="nu">-2.1</span>)];
[uiSliderIconKnobShadow <span class="me">setShadowBlurRadius</span>: <span class="nu">2</span>];

<span class="cm">//// Rectangle Drawing</span>
<span class="cl">NSBezierPath</span>* rectanglePath = [<span class="cl">NSBezierPath</span> <span class="me">bezierPathWithRoundedRect</span>: <span class="fn">NSMakeRect</span>(<span class="nu">3.5</span>, <span class="nu">3.5</span>, <span class="nu">16</span>, <span class="nu">8</span>) <span class="me">xRadius</span>: <span class="nu">4</span> <span class="me">yRadius</span>: <span class="nu">4</span>];
[iosControlGreen <span class="me">setFill</span>];
[rectanglePath <span class="me">fill</span>];
[iosControlGreen <span class="me">setStroke</span>];
[rectanglePath <span class="me">setLineWidth</span>: <span class="nu">1</span>];
[rectanglePath <span class="me">stroke</span>];


<span class="cm">//// Oval Drawing</span>
<span class="cl">NSBezierPath</span>* ovalPath = [<span class="cl">NSBezierPath</span> <span class="me">bezierPathWithOvalInRect</span>: <span class="fn">NSMakeRect</span>(<span class="nu">11.5</span>, <span class="nu">3.5</span>, <span class="nu">8</span>, <span class="nu">8</span>)];</div></div>

<!-- right panel -->
<div class="a" style="left:996px;top:145px;width:230px;height:601px;background:#ececec;border-radius:0 0 3px 0"></div>
<svg class="a" style="left:1003px;top:151px" width="10" height="8" viewBox="0 0 10 8"><path d="M0.3 0.3h9.4l-4.7 7.5z" fill="#4a92e2"/></svg>
<div class="a" style="left:1017px;top:148.5px;font-size:10.5px;color:#4a4a4a;white-space:nowrap">Icon UISwitch</div>
<div class="a" style="left:1013px;top:171.3px;width:9.5px;height:9.5px;border-radius:50%;background:#8d8d8d;border:1px solid #5a5a5a"></div>
<div class="a" style="left:1029.5px;top:169.5px;font-size:10.5px;color:#4a4a4a">Oval</div>
<div class="a" style="left:996px;top:187px;width:230px;height:20.6px;background:#b6cfe7"></div>
<div class="a" style="left:1013px;top:192.5px;width:9px;height:9px;background:#7a7f85;border:1px solid #444a50"></div>
<div class="a" style="left:1029.5px;top:191px;font-size:10.5px;color:#fff">Rectangle</div>
<div class="a" style="left:996px;top:227.5px;width:230px;height:21px;background:linear-gradient(#dedede,#d3d3d3);border-top:1px solid #cfcfcf;border-bottom:1px solid #c6c6c6;font-size:10.3px;font-weight:bold;color:#4a4a4a;text-align:center;line-height:19px">Rectangle</div>
<div class="inp" style="left:1010px;top:263.5px;width:202.5px"><span class="a" style="left:3.5px;color:#555">Rectangle</span></div>
<div class="pop" style="left:1010px;top:287.5px;width:202.5px"><span class="a" style="left:9.5px">Visible on all displays</span><svg class="a" style="left:192px;top:3px" viewBox="0 0 5 9" width="5" height="9"><path d="M2.5 0.5l2.3 3h-4.6z M2.5 8.5l2.3-3h-4.6z" fill="#444"/></svg></div>
<div class="plbl" style="left:1010px;width:44px;top:314.5px">Radius</div>
<div class="inp" style="left:1059.5px;top:312.3px;width:68px"><span class="v">4</span></div>
<div class="a" style="left:1144.5px;top:312.3px;width:67.5px;height:31px;border:1px solid #c9c9c9;border-radius:5px;background:linear-gradient(#f7f7f7,#eeeeee)"></div>
<div class="a" style="left:1178px;top:313px;width:1px;height:30px;background:#c9c9c9"></div>
<div class="a" style="left:1145px;top:327px;width:66.5px;height:1px;background:#c9c9c9"></div>
<div class="hr" style="top:357px"></div>
<svg class="a" style="left:1001px;top:367px" width="54" height="53" viewBox="0 0 54 53">
<rect x="1.5" y="1.5" width="51" height="50" fill="none" stroke="#9fd3ea" stroke-width="1" stroke-dasharray="1.5 1.5"/>
<rect x="14.5" y="13.5" width="25" height="25" fill="none" stroke="#9a9a9a" stroke-width="1.1"/>
<g stroke="#a8a8a8" stroke-width=".8" fill="none"><path d="M26.5 3v35M3 26h11.5M14.5 26h25"/><path d="M39.5 26l2-2 2 4 2-4 2 4 2-2h3"/><path d="M26.5 38.5v2l-2 2 4 2-4 2 4 2-2 2v1"/></g>
</svg>
<div class="inp" style="left:1059.5px;top:372.7px;width:68px"><span class="ph">X</span><span class="v">3.5</span></div>
<div class="inp" style="left:1144.5px;top:372.7px;width:68px"><span class="ph">Y</span><span class="v">3.5</span></div>
<div class="inp" style="left:1059.5px;top:396.6px;width:68px"><span class="ph">W</span><span class="v">8</span></div>
<div class="inp" style="left:1144.5px;top:396.6px;width:68px"><span class="ph">H</span><span class="v">8</span></div>
<div class="hr" style="top:427.5px"></div>
<svg class="tri" style="top:441.5px" viewBox="0 0 10 10"><path d="M0.5 1.5h9l-4.5 8z" fill="#3c3c3c"/></svg>
<div class="shdr" style="left:1020px;top:439px">Transforms</div>
<div class="plbl" style="left:1010px;width:43px;top:469.5px">Rotation</div>
<div class="inp" style="left:1059.5px;top:467px;width:68px"><span class="v">0</span></div>
<div class="a" style="left:1170px;top:464px;width:20px;height:20px;border-radius:50%;border:1px solid #c4c4c4;background:linear-gradient(#fafafa,#eeeeee)"><div class="a" style="left:12px;top:7.5px;width:4px;height:4px;border-radius:50%;border:1px solid #999"></div></div>
<div class="plbl" style="left:1010px;width:43px;top:493px">Offset</div>
<div class="inp" style="left:1059.5px;top:490.8px;width:68px"><span class="ph">X</span><span class="v">0</span></div>
<div class="inp" style="left:1144.5px;top:490.8px;width:68px"><span class="ph">Y</span><span class="v">0</span></div>
<div class="plbl" style="left:1010px;width:43px;top:517px">Scale</div>
<div class="inp" style="left:1059.5px;top:514.8px;width:68px"><span class="ph">X</span><span class="v">1</span></div>
<div class="inp" style="left:1144.5px;top:514.8px;width:68px"><span class="ph">Y</span><span class="v">1</span></div>
<div class="hr" style="top:544.5px"></div>
<svg class="tri" style="top:558.5px" viewBox="0 0 10 10"><path d="M1.5 0.5v9l8-4.5z" fill="#3c3c3c"/></svg>
<div class="shdr" style="left:1020px;top:556.5px">Text</div>
<div class="hr" style="top:580.5px"></div>
<svg class="tri" style="top:595.5px" viewBox="0 0 10 10"><path d="M0.5 1.5h9l-4.5 8z" fill="#3c3c3c"/></svg>
<div class="shdr" style="left:1020px;top:593px">Fill</div>
<div class="well" style="top:590px"><div class="x">×</div><div class="sw"></div></div>
<div class="pop" style="left:1010.5px;top:619.5px;width:202px;height:16.5px"><div class="a" style="left:6px;top:1.5px;width:12.5px;height:12.5px;border-radius:50%;background:#47cf5d;border:1px solid #35a84a"></div><span class="a" style="left:25px">ios Control Green</span><svg class="a" style="left:192px;top:3px" viewBox="0 0 5 9" width="5" height="9"><path d="M2.5 0.5l2.3 3h-4.6z M2.5 8.5l2.3-3h-4.6z" fill="#444"/></svg></div>
<div class="hr" style="top:649.5px"></div>
<svg class="tri" style="top:663.5px" viewBox="0 0 10 10"><path d="M1.5 0.5v9l8-4.5z" fill="#3c3c3c"/></svg>
<div class="shdr" style="left:1020px;top:661.5px">Stroke</div>
<div class="well" style="top:658px"><div class="x">×</div><div class="sw"></div></div>
<div class="hr" style="top:685.5px"></div>
<svg class="tri" style="top:700.5px" viewBox="0 0 10 10"><path d="M0.5 1.5h9l-4.5 8z" fill="#3c3c3c"/></svg>
<div class="shdr" style="left:1020px;top:698px">Shadows</div>
<div class="plbl" style="left:1005px;width:48px;top:727.5px">Outer Fill</div>
<div class="pop" style="left:1059.5px;top:725px;width:152.5px;height:16.7px"><svg class="a" style="left:8.5px;top:1px" width="14" height="14" viewBox="0 0 14 14"><circle cx="7" cy="7" r="5.8" fill="#fff" stroke="#bbb" stroke-width="1"/><path d="M3 11L11 3" stroke="#e05050" stroke-width="1.2"/></svg><span class="a" style="left:26px">No Shadow</span><svg class="a" style="left:142px;top:3px" viewBox="0 0 5 9" width="5" height="9"><path d="M2.5 0.5l2.3 3h-4.6z M2.5 8.5l2.3-3h-4.6z" fill="#444"/></svg></div>
</body></html>
